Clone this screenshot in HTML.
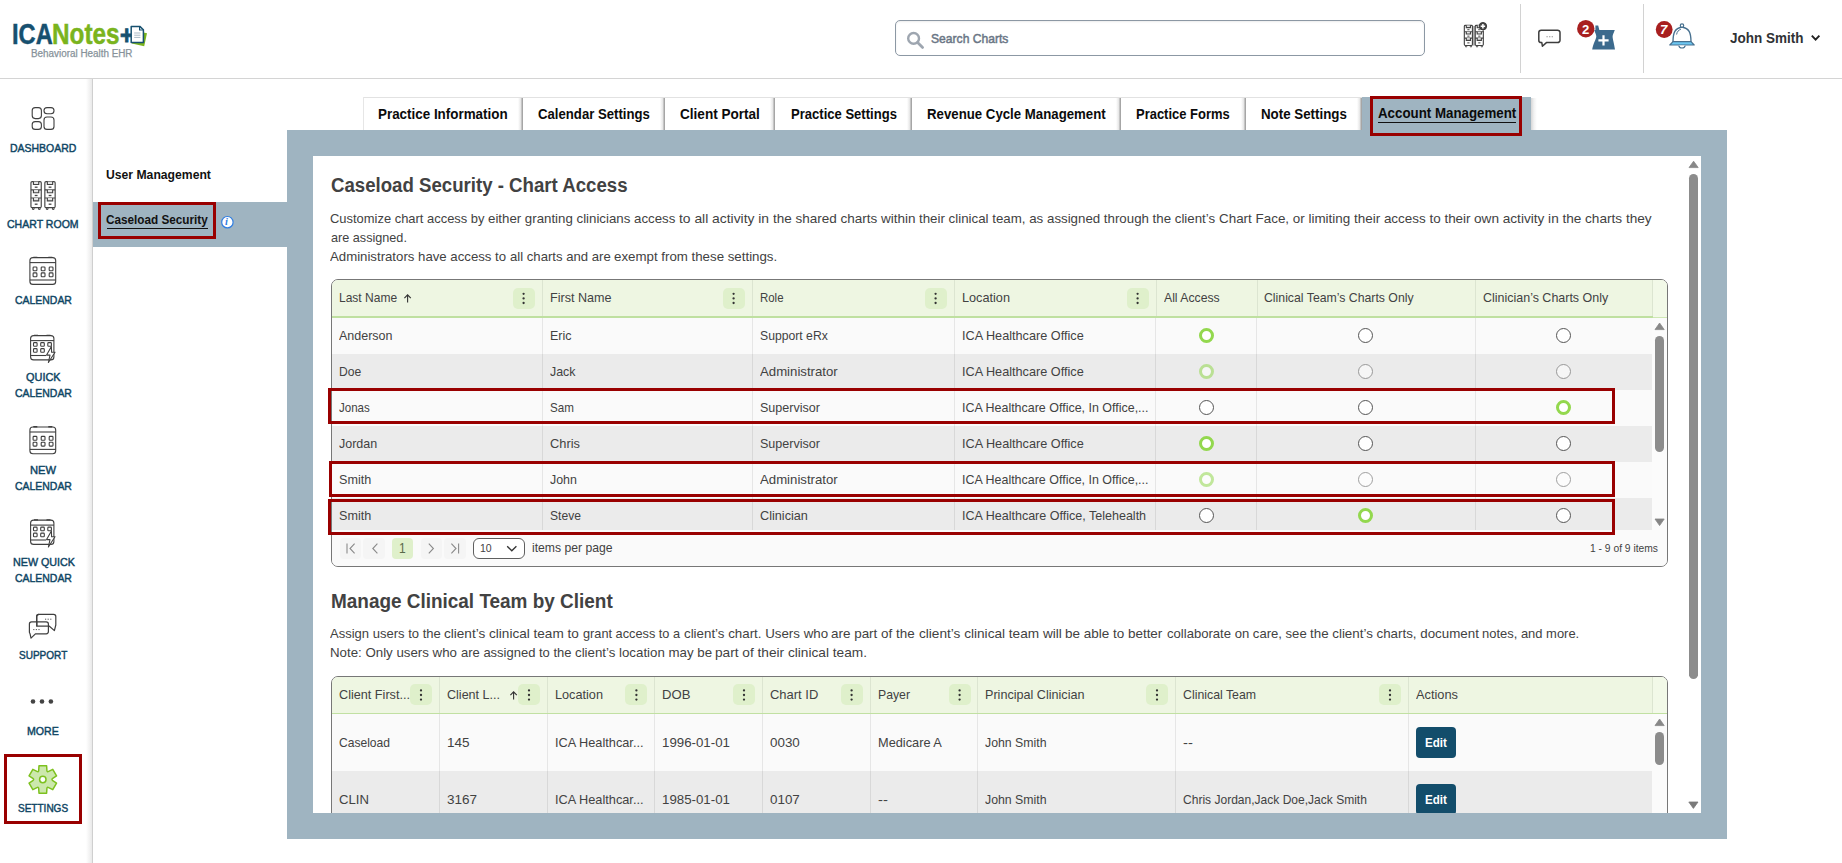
<!DOCTYPE html>
<html lang="en"><head><meta charset="utf-8"><title>ICANotes - Account Management - Caseload Security</title>
<style>
html,body{margin:0;padding:0;background:#fff;}
body{width:1842px;height:863px;overflow:hidden;font-family:"Liberation Sans",sans-serif;}
#app{position:relative;width:1842px;height:863px;overflow:hidden;background:#fff;}
#app div,#app header,#app nav,#app main,#app section,#app a,#app button,#app ul,#app li,#app p,#app h1,#app h2,#app aside{position:absolute;box-sizing:border-box;margin:0;padding:0;}
#app button{border:0;font:inherit;cursor:pointer;}
#app p,#app h1,#app h2,.wrap{left:0;top:0;width:0;height:0;font-size:inherit;font-weight:inherit;}
#app svg{position:absolute;overflow:visible;}
.t{position:absolute;white-space:pre;transform-origin:0 0;line-height:normal;font-family:"Liberation Sans",sans-serif;}
.hl{border:3px solid #990000;background:transparent;}

</style></head>
<body>
<div id="app">
<header style="left:0;top:0;width:1842px;height:79px;border-bottom:1px solid #d4d4d4;background:#fff;"><span class="t" style="left:11.70px;top:18.00px;font-size:29px;color:#17506f;font-weight:700;transform:scaleX(0.8148);-webkit-text-stroke:0.5px #17506f;">ICA</span><span class="t" style="left:51.70px;top:18.00px;font-size:29px;color:#7ab41d;font-weight:700;transform:scaleX(0.8377);-webkit-text-stroke:0.5px #7ab41d;">Notes</span><span class="t" style="left:120.30px;top:20.00px;font-size:26px;color:#17506f;font-weight:700;transform:scaleX(0.8757);-webkit-text-stroke:0.9px #17506f;">+</span><span class="t" style="left:30.50px;top:48.00px;font-size:10px;color:#87929a;transform:scaleX(0.9871);-webkit-text-stroke:0.25px #87929a;">Behavioral Health EHR</span><svg style="left:128px;top:22px" width="22" height="24" viewBox="128 22 22 24">
<path d="M134.5 30.5 L147 33.2 L144.2 46.3 L131.8 43.6 Z" fill="#7ab41d"/>
<path d="M131.2 26.4 L139.8 26.4 L143.4 29.8 L143.4 42.6 L131.2 42.6 Z" fill="#fff" stroke="#17506f" stroke-width="1.5" stroke-linejoin="round"/>
<path d="M139.6 26.6 L139.6 30 L143.2 30" fill="none" stroke="#17506f" stroke-width="1.2"/>
<path d="M134.2 33h6.2M134.2 35.2h6.2M134.2 37.4h6.2" stroke="#9fb1bd" stroke-width="0.9"/>
</svg><div class="search" style="left:895px;top:20px;width:530px;height:36px;border:1px solid #8c98a4;border-radius:5px;background:#fff;box-shadow:inset 0 1px 2px rgba(0,0,0,.08);"></div><svg style="left:904px;top:29px" width="22" height="22" viewBox="904 29 22 22">
<circle cx="913.6" cy="38.4" r="5.4" fill="none" stroke="#9ea6b0" stroke-width="2.4"/>
<path d="M917.6 42.6 L922.6 47.4" stroke="#9ea6b0" stroke-width="2.8" stroke-linecap="round"/></svg><span class="t" style="left:931.20px;top:31.00px;font-size:13px;color:#6a7685;transform:scaleX(0.9315);-webkit-text-stroke:0.5px #6a7685;">Search Charts</span><svg style="left:1462px;top:20px" width="26" height="30" viewBox="1462 20 26 30">
<rect x="1472.6" y="26" width="2.8" height="19.6" fill="#b0b0b0"/>
<g transform="translate(1463.9 24.9) scale(0.785 0.775)"><g fill="none" stroke="#444" stroke-width="1.45"><rect x="0.55" y="0.6" width="10.3" height="26" rx="1.2"/><path d="M0.55 8.9h10.3M0.55 17.0h10.3"/><path d="M2.05 26.8v1.6h1.6v-1.6M8.15 26.8v1.6h1.6v-1.6" stroke-width="1"/><path d="M3.05 0.6v2.9h5.3v-2.9" fill="#e4e4e4"/><path d="M4.35 6.2h2.8" stroke-width="1.3"/><path d="M3.05 8.9v2.9h5.3v-2.9" fill="#e4e4e4"/><path d="M4.35 14.5h2.8" stroke-width="1.3"/><path d="M3.05 17.0v2.9h5.3v-2.9" fill="#e4e4e4"/><path d="M4.35 23.2h2.8" stroke-width="1.3"/><rect x="14.45" y="0.6" width="10.3" height="26" rx="1.2"/><path d="M14.45 8.9h10.3M14.45 17.0h10.3"/><path d="M15.95 26.8v1.6h1.6v-1.6M22.05 26.8v1.6h1.6v-1.6" stroke-width="1"/><path d="M16.95 0.6v2.9h5.3v-2.9" fill="#e4e4e4"/><path d="M18.25 6.2h2.8" stroke-width="1.3"/><path d="M16.95 8.9v2.9h5.3v-2.9" fill="#e4e4e4"/><path d="M18.25 14.5h2.8" stroke-width="1.3"/><path d="M16.95 17.0v2.9h5.3v-2.9" fill="#e4e4e4"/><path d="M18.25 23.2h2.8" stroke-width="1.3"/></g></g>
<circle cx="1482.9" cy="26.2" r="4.3" fill="#fff"/>
<circle cx="1482.9" cy="26.2" r="3.7" fill="#4a4a4a" stroke="#333" stroke-width="1"/>
<path d="M1480.7 26.2h4.4M1482.9 24v4.4" stroke="#fff" stroke-width="1.5"/>
</svg><div style="left:1520px;top:4px;width:1px;height:69px;background:#d2d2d2;"></div><div style="left:1643px;top:4px;width:1px;height:69px;background:#d2d2d2;"></div><svg style="left:1536px;top:27px" width="28" height="22" viewBox="1536 27 28 22">
<path d="M1541.2 30.2 h16.4 a2.4 2.4 0 0 1 2.4 2.4 v7.6 a2.4 2.4 0 0 1 -2.4 2.4 h-11.2 l-4 3.6 l-0.6 -3.6 h-0.6 a2.4 2.4 0 0 1 -2.4 -2.4 v-7.6 a2.4 2.4 0 0 1 2.4 -2.4 z" fill="#fff" stroke="#3d3d3d" stroke-width="1.5" stroke-linejoin="round"/>
<path d="M1546.4 36.8h1.4M1549 36.8h1.4M1551.6 36.8h1.4" stroke="#999" stroke-width="1.1"/>
</svg><svg style="left:1575px;top:18px" width="44" height="34" viewBox="1575 18 44 34">
<path d="M1594.2 30 L1614.8 30 C1614 32.5 1612.6 34.5 1612.6 36.5 C1612.6 39 1614.2 44 1615 49.4 L1592.2 49.4 C1593 44 1596.3 39 1596.3 36.5 C1596.3 34.5 1595 32.5 1594.2 30 Z M1595.4 30.2 L1595.4 25.6 L1598.2 25.6 L1599.4 30.2 Z" fill="#3c6a8d"/>
<path d="M1598.4 40.3h10.2M1603.5 35.2v10.2" stroke="#fff" stroke-width="2.2"/>
<circle cx="1585.8" cy="28.7" r="8.7" fill="#a81f1f"/>
</svg><span class="t" style="left:1581.90px;top:23.00px;font-size:12.5px;color:#fff;font-weight:700;transform:scaleX(1.0499);">2</span><svg style="left:1654px;top:18px" width="44" height="34" viewBox="1654 18 44 34">
<path d="M1673 42 C1673 32 1675 28.6 1682 27 C1689 28.6 1691 32 1691 42" fill="#fff" stroke="#47708f" stroke-width="1.4"/>
<path d="M1676.6 34.5 C1677 31.6 1678.6 30 1680.8 29.4" fill="none" stroke="#47708f" stroke-width="1"/>
<circle cx="1682" cy="25.6" r="1.7" fill="#fff" stroke="#47708f" stroke-width="1.2"/>
<path d="M1673 41.6 L1691 41.6 L1694.2 45 L1669.8 45 Z" fill="#6cc7f2" stroke="#47708f" stroke-width="1.2" stroke-linejoin="round"/>
<path d="M1678.8 45.6 C1679.6 48.8 1684.4 48.8 1685.2 45.6" fill="#fff" stroke="#47708f" stroke-width="1.2"/>
<circle cx="1664.2" cy="29.5" r="8.4" fill="#a81f1f"/>
</svg><span class="t" style="left:1660.30px;top:23.00px;font-size:12.5px;color:#fff;font-weight:700;transform:scaleX(1.0499);font-style:italic;">7</span><span class="t" style="left:1729.50px;top:29.00px;font-size:15px;color:#303234;font-weight:700;transform:scaleX(0.8999);">John Smith</span><svg style="left:1809px;top:33px" width="14" height="10" viewBox="1809 33 14 10">
<path d="M1811.8 35.6 L1815.6 39.6 L1819.4 35.6" fill="none" stroke="#222" stroke-width="1.9"/></svg></header><nav class="wrap"><div style="left:0;top:79px;width:93px;height:784px;border-right:1px solid #cfcfcf;background:linear-gradient(to right,#fff 0,#fff 86px,#e9e9e9 92px);"></div><svg style="left:30px;top:105px" width="26" height="26" viewBox="30 105 26 26"><g fill="none" stroke="#3f3f3f" stroke-width="1.1">
<rect x="32.2" y="107.6" width="9.2" height="11" rx="3"/>
<rect x="44" y="107.6" width="10" height="6.2" rx="3"/>
<rect x="32.2" y="121.6" width="9.2" height="7.8" rx="3"/>
<rect x="44" y="117" width="10" height="12.4" rx="3"/></g></svg><span class="t" style="left:10.00px;top:142.00px;font-size:11.4px;color:#0e4564;transform:scaleX(0.9188);-webkit-text-stroke:0.45px #0e4564;">DASHBOARD</span><svg style="left:29px;top:180px" width="28" height="31" viewBox="29 180 28 31"><g fill="none" stroke="#444" stroke-width="1.15"><rect x="30.95" y="181.6" width="10.3" height="26" rx="1.2"/><path d="M30.95 189.9h10.3M30.95 198.0h10.3"/><path d="M32.45 207.8v1.6h1.6v-1.6M38.55 207.8v1.6h1.6v-1.6" stroke-width="1"/><path d="M33.45 181.6v2.9h5.3v-2.9" fill="#e4e4e4"/><path d="M34.75 187.2h2.8" stroke-width="1.3"/><path d="M33.45 189.9v2.9h5.3v-2.9" fill="#e4e4e4"/><path d="M34.75 195.5h2.8" stroke-width="1.3"/><path d="M33.45 198.0v2.9h5.3v-2.9" fill="#e4e4e4"/><path d="M34.75 204.2h2.8" stroke-width="1.3"/><rect x="44.85" y="181.6" width="10.3" height="26" rx="1.2"/><path d="M44.85 189.9h10.3M44.85 198.0h10.3"/><path d="M46.35 207.8v1.6h1.6v-1.6M52.45 207.8v1.6h1.6v-1.6" stroke-width="1"/><path d="M47.35 181.6v2.9h5.3v-2.9" fill="#e4e4e4"/><path d="M48.65 187.2h2.8" stroke-width="1.3"/><path d="M47.35 189.9v2.9h5.3v-2.9" fill="#e4e4e4"/><path d="M48.65 195.5h2.8" stroke-width="1.3"/><path d="M47.35 198.0v2.9h5.3v-2.9" fill="#e4e4e4"/><path d="M48.65 204.2h2.8" stroke-width="1.3"/></g></svg><span class="t" style="left:7.30px;top:218.00px;font-size:11.4px;color:#0e4564;transform:scaleX(0.9248);-webkit-text-stroke:0.45px #0e4564;">CHART ROOM</span><svg style="left:28px;top:256px" width="30" height="30" viewBox="28 256 30 30"><g fill="none" stroke="#3f3f3f" stroke-width="1.1"><rect x="29.9" y="257.6" width="25.8" height="26.8" rx="3"/><path d="M29.9 262.6h25.8"/><path d="M29.9 280.0h25.8"/><path d="M33.3 257.4h4M48.3 257.4h4" stroke-width="1.4"/><rect x="33.1" y="267.0" width="3.8" height="3.8" rx="0.8"/><rect x="41.2" y="267.0" width="3.8" height="3.8" rx="0.8"/><rect x="49.2" y="267.0" width="3.8" height="3.8" rx="0.8"/><rect x="33.1" y="272.9" width="3.8" height="3.8" rx="0.8"/><rect x="41.2" y="272.9" width="3.8" height="3.8" rx="0.8"/><rect x="49.2" y="272.9" width="3.8" height="3.8" rx="0.8"/></g></svg><span class="t" style="left:14.80px;top:294.00px;font-size:11.4px;color:#0e4564;transform:scaleX(0.9173);-webkit-text-stroke:0.45px #0e4564;">CALENDAR</span><svg style="left:28px;top:334px" width="30" height="31" viewBox="28 334 30 31"><g fill="none" stroke="#3f3f3f" stroke-width="1.1"><rect x="30.6" y="335.6" width="23.3" height="24.3" rx="3"/><path d="M30.6 340.6h23.3"/><path d="M30.6 355.5h15.5"/><path d="M34.0 335.4h4M46.5 335.4h4" stroke-width="1.4"/><rect x="33.5" y="342.6" width="3.6" height="3.6" rx="0.8"/><rect x="40.7" y="342.6" width="3.6" height="3.6" rx="0.8"/><rect x="47.8" y="342.6" width="3.6" height="3.6" rx="0.8"/><rect x="33.5" y="348.6" width="3.6" height="3.6" rx="0.8"/><rect x="40.7" y="348.6" width="3.6" height="3.6" rx="0.8"/></g><path d="M51.4 346.5 L46.6 355.1 L50.0 355.1 L48.4 362.5 L55.0 352.3 L51.6 352.3 Z" fill="#fff" stroke="#3f3f3f" stroke-width="1.1" stroke-linejoin="round"/></svg><span class="t" style="left:26.00px;top:371.00px;font-size:11.4px;color:#0e4564;transform:scaleX(0.9590);-webkit-text-stroke:0.45px #0e4564;">QUICK</span><span class="t" style="left:14.80px;top:387.00px;font-size:11.4px;color:#0e4564;transform:scaleX(0.9173);-webkit-text-stroke:0.45px #0e4564;">CALENDAR</span><svg style="left:28px;top:425px" width="30" height="30" viewBox="28 425 30 30"><g fill="none" stroke="#3f3f3f" stroke-width="1.1"><rect x="29.9" y="427.0" width="25.8" height="26.8" rx="3"/><path d="M29.9 432.0h25.8"/><path d="M29.9 449.4h25.8"/><path d="M33.3 426.8h4M48.3 426.8h4" stroke-width="1.4"/><rect x="33.1" y="436.4" width="3.8" height="3.8" rx="0.8"/><rect x="41.2" y="436.4" width="3.8" height="3.8" rx="0.8"/><rect x="49.2" y="436.4" width="3.8" height="3.8" rx="0.8"/><rect x="33.1" y="442.3" width="3.8" height="3.8" rx="0.8"/><rect x="41.2" y="442.3" width="3.8" height="3.8" rx="0.8"/><rect x="49.2" y="442.3" width="3.8" height="3.8" rx="0.8"/></g></svg><span class="t" style="left:30.40px;top:464.00px;font-size:11.4px;color:#0e4564;transform:scaleX(0.9782);-webkit-text-stroke:0.45px #0e4564;">NEW</span><span class="t" style="left:14.80px;top:480.00px;font-size:11.4px;color:#0e4564;transform:scaleX(0.9173);-webkit-text-stroke:0.45px #0e4564;">CALENDAR</span><svg style="left:28px;top:518px" width="30" height="31" viewBox="28 518 30 31"><g fill="none" stroke="#3f3f3f" stroke-width="1.1"><rect x="30.6" y="520.1" width="23.3" height="24.3" rx="3"/><path d="M30.6 525.1h23.3"/><path d="M30.6 540.0h15.5"/><path d="M34.0 519.9h4M46.5 519.9h4" stroke-width="1.4"/><rect x="33.5" y="527.1" width="3.6" height="3.6" rx="0.8"/><rect x="40.7" y="527.1" width="3.6" height="3.6" rx="0.8"/><rect x="47.8" y="527.1" width="3.6" height="3.6" rx="0.8"/><rect x="33.5" y="533.1" width="3.6" height="3.6" rx="0.8"/><rect x="40.7" y="533.1" width="3.6" height="3.6" rx="0.8"/></g><path d="M51.4 531.0 L46.6 539.6 L50.0 539.6 L48.4 547.0 L55.0 536.8 L51.6 536.8 Z" fill="#fff" stroke="#3f3f3f" stroke-width="1.1" stroke-linejoin="round"/></svg><span class="t" style="left:12.50px;top:556.00px;font-size:11.4px;color:#0e4564;transform:scaleX(0.9418);-webkit-text-stroke:0.45px #0e4564;">NEW QUICK</span><span class="t" style="left:14.80px;top:572.00px;font-size:11.4px;color:#0e4564;transform:scaleX(0.9173);-webkit-text-stroke:0.45px #0e4564;">CALENDAR</span><svg style="left:27px;top:612px" width="32" height="29" viewBox="27 612 32 29"><g fill="#fff" stroke="#3f3f3f" stroke-width="1.2" stroke-linejoin="round">
<path d="M38.8 614.4 h14.8 a2.2 2.2 0 0 1 2.2 2.2 v8.4 l-1.4 5.6 l-5 -4.4 h-10.6 a2.2 2.2 0 0 1 -2.2 -2.2 v-7.4 a2.2 2.2 0 0 1 2.2 -2.2 z"/>
<path d="M31.6 621.8 h14.6 a2.2 2.2 0 0 1 2.2 2.2 v7.6 a2.2 2.2 0 0 1 -2.2 2.2 h-10.8 l-4.4 4.4 l-1 -4.6 a2.2 2.2 0 0 1 -0.6 -1.6 v-8 a2.2 2.2 0 0 1 2.2 -2.2 z"/>
<path d="M36.8 626.2 v-9.6 a2.2 2.2 0 0 1 2.2 -2.2" fill="none"/>
</g>
<path d="M45 619.2h1.2M47.6 619.2h1.2M50.2 619.2h1.2M33.2 629.6h1.2M35.8 629.6h1.2M38.4 629.6h1.2" stroke="#555" stroke-width="1"/>
<path d="M36.8 621.8 v4.4 h11.6" fill="none" stroke="#3f3f3f" stroke-width="1.2"/>
</svg><span class="t" style="left:18.80px;top:649.00px;font-size:11.4px;color:#0e4564;transform:scaleX(0.8804);-webkit-text-stroke:0.45px #0e4564;">SUPPORT</span><svg style="left:28px;top:697px" width="28" height="10" viewBox="28 697 28 10"><g fill="#444"><circle cx="33" cy="701.5" r="2.3"/><circle cx="42" cy="701.5" r="2.3"/><circle cx="50.9" cy="701.5" r="2.3"/></g></svg><span class="t" style="left:27.30px;top:725.00px;font-size:11.4px;color:#0e4564;transform:scaleX(0.9302);-webkit-text-stroke:0.45px #0e4564;">MORE</span><svg style="left:26px;top:763px" width="34" height="34" viewBox="26 763 34 34">
<path d="M38.70 770.38 L39.00 765.82 L46.60 765.82 L46.90 770.38 Q47.00 772.23 48.65 771.39 L52.75 769.37 L56.55 775.95 L52.75 778.49 Q51.20 779.50 52.75 780.51 L56.55 783.05 L52.75 789.63 L48.65 787.61 Q47.00 786.77 46.90 788.62 L46.60 793.18 L39.00 793.18 L38.70 788.62 Q38.60 786.77 36.95 787.61 L32.85 789.63 L29.05 783.05 L32.85 780.51 Q34.40 779.50 32.85 778.49 L29.05 775.95 L32.85 769.37 L36.95 771.39 Q38.60 772.23 38.70 770.38 Z" fill="#cce8ac" stroke="#7dc11f" stroke-width="1.5" stroke-linejoin="round"/>
<circle cx="42.8" cy="779.5" r="3.2" fill="#fff" stroke="#7dc11f" stroke-width="1.5"/></svg><span class="t" style="left:18.00px;top:802.00px;font-size:11.4px;color:#0e4564;transform:scaleX(0.8794);-webkit-text-stroke:0.45px #0e4564;">SETTINGS</span><div class="hl" style="left:4px;top:754px;width:78px;height:70px;"></div></nav><aside class="wrap"><span class="t" style="left:106.10px;top:167.00px;font-size:13px;color:#111;font-weight:700;transform:scaleX(0.9367);">User Management</span><div style="left:93px;top:202px;width:194px;height:45px;background:#9fb4c1;"></div><span class="t" style="left:106.10px;top:212.00px;font-size:13px;color:#111;font-weight:700;transform:scaleX(0.9031);">Caseload Security</span><div style="left:107px;top:228px;width:101px;height:1px;background:#111;"></div><div class="hl" style="left:98px;top:202px;width:118px;height:37px;"></div><svg style="left:220px;top:215px" width="15" height="15" viewBox="220 215 15 15"><circle cx="227.4" cy="222.2" r="5.7" fill="#fff" stroke="#2f7de1" stroke-width="1.2"/></svg><span class="t" style="left:225.40px;top:217.00px;font-size:9.5px;color:#2f7de1;font-weight:700;transform:scaleX(1.1000);font-style:italic;font-family:'Liberation Serif',serif;">i</span></aside><main class="wrap"><a class="tab" style="left:363px;top:97px;width:160px;height:33px;background:linear-gradient(to right,#fff 0,#fff calc(100% - 5px),#e4e4e4 calc(100% - 2px),#a6a6a6 calc(100% - 1px),#a6a6a6 100%);border-top:1px solid #e2e2e2;"><span class="t" style="left:14.90px;top:7.00px;font-size:15px;color:#0b0b0b;font-weight:700;transform:scaleX(0.8935);">Practice Information</span></a><a class="tab" style="left:523px;top:97px;width:142px;height:33px;background:linear-gradient(to right,#fff 0,#fff calc(100% - 5px),#e4e4e4 calc(100% - 2px),#a6a6a6 calc(100% - 1px),#a6a6a6 100%);border-top:1px solid #e2e2e2;"><span class="t" style="left:14.50px;top:7.00px;font-size:15px;color:#0b0b0b;font-weight:700;transform:scaleX(0.8774);">Calendar Settings</span></a><a class="tab" style="left:665px;top:97px;width:110px;height:33px;background:linear-gradient(to right,#fff 0,#fff calc(100% - 5px),#e4e4e4 calc(100% - 2px),#a6a6a6 calc(100% - 1px),#a6a6a6 100%);border-top:1px solid #e2e2e2;"><span class="t" style="left:14.90px;top:7.00px;font-size:15px;color:#0b0b0b;font-weight:700;transform:scaleX(0.9043);">Client Portal</span></a><a class="tab" style="left:775px;top:97px;width:137px;height:33px;background:linear-gradient(to right,#fff 0,#fff calc(100% - 5px),#e4e4e4 calc(100% - 2px),#a6a6a6 calc(100% - 1px),#a6a6a6 100%);border-top:1px solid #e2e2e2;"><span class="t" style="left:15.50px;top:7.00px;font-size:15px;color:#0b0b0b;font-weight:700;transform:scaleX(0.8700);">Practice Settings</span></a><a class="tab" style="left:912px;top:97px;width:209px;height:33px;background:linear-gradient(to right,#fff 0,#fff calc(100% - 5px),#e4e4e4 calc(100% - 2px),#a6a6a6 calc(100% - 1px),#a6a6a6 100%);border-top:1px solid #e2e2e2;"><span class="t" style="left:14.90px;top:7.00px;font-size:15px;color:#0b0b0b;font-weight:700;transform:scaleX(0.8821);">Revenue Cycle Management</span></a><a class="tab" style="left:1121px;top:97px;width:125px;height:33px;background:linear-gradient(to right,#fff 0,#fff calc(100% - 5px),#e4e4e4 calc(100% - 2px),#a6a6a6 calc(100% - 1px),#a6a6a6 100%);border-top:1px solid #e2e2e2;"><span class="t" style="left:15.30px;top:7.00px;font-size:15px;color:#0b0b0b;font-weight:700;transform:scaleX(0.8645);">Practice Forms</span></a><a class="tab" style="left:1246px;top:97px;width:116px;height:33px;background:linear-gradient(to right,#fff 0,#fff calc(100% - 5px),#e4e4e4 calc(100% - 2px),#a6a6a6 calc(100% - 1px),#a6a6a6 100%);border-top:1px solid #e2e2e2;"><span class="t" style="left:15.10px;top:7.00px;font-size:15px;color:#0b0b0b;font-weight:700;transform:scaleX(0.8884);">Note Settings</span></a><div style="left:363px;top:97px;width:1px;height:33px;background:#e6e6e6;"></div><div style="left:1531px;top:98px;width:6px;height:32px;background:linear-gradient(to right,rgba(0,0,0,.16),rgba(0,0,0,.05) 50%,rgba(0,0,0,0));"></div><a class="tab active" style="left:1362px;top:97px;width:169px;height:34px;background:#9fb4c1;"><span class="t" style="left:15.50px;top:7.00px;font-size:15px;color:#0b0b0b;font-weight:700;transform:scaleX(0.8873);">Account Management</span><div style="left:16px;top:25px;width:138px;height:1px;background:#111;"></div></a><div class="hl" style="left:1370px;top:96px;width:152px;height:40px;"></div><div style="left:287px;top:130px;width:1440px;height:709px;background:#9fb4c1;"></div><div style="left:313px;top:156px;width:1388px;height:657px;background:#fff;"></div><div class="hl" style="left:1370px;top:96px;width:152px;height:40px;"></div><div style="left:1686px;top:156px;width:15px;height:657px;background:#fff;"></div><div style="left:1689px;top:174px;width:9px;height:505px;background:#8c8c8c;border-radius:4.5px;"></div><svg style="left:1686px;top:156px" width="15" height="657" viewBox="1686 156 15 657"><path d="M1689 167.6 L1693.6 161.2 L1698.2 167.6 Z" fill="#888" stroke="#888" stroke-width="0.8" stroke-linejoin="round"/><path d="M1688.8 802 L1693.4 808.4 L1698 802 Z" fill="#7a7a7a" stroke="#7a7a7a" stroke-width="0.8" stroke-linejoin="round"/></svg><h1><span class="t" style="left:330.50px;top:174.00px;font-size:20px;color:#424242;font-weight:700;transform:scaleX(0.9316);">Caseload Security - Chart Access</span></h1><p><span class="t" style="left:330.00px;top:211.00px;font-size:13px;color:#424242;transform:scaleX(0.9946);">Customize chart access by </span><span class="t" style="left:488.10px;top:211.00px;font-size:13px;color:#424242;transform:scaleX(1.0205);">either granting clinicians access </span><span class="t" style="left:679.10px;top:211.00px;font-size:13px;color:#424242;transform:scaleX(1.0652);">to all activity in </span><span class="t" style="left:773.00px;top:211.00px;font-size:13px;color:#424242;transform:scaleX(1.0383);">the shared charts within </span><span class="t" style="left:919.30px;top:211.00px;font-size:13px;color:#424242;transform:scaleX(1.0232);">their clinical team, as </span><span class="t" style="left:1047.20px;top:211.00px;font-size:13px;color:#424242;transform:scaleX(1.0217);">assigned through the client’s </span><span class="t" style="left:1219.00px;top:211.00px;font-size:13px;color:#424242;transform:scaleX(1.0316);">Chart Face, or limiting </span><span class="t" style="left:1353.90px;top:211.00px;font-size:13px;color:#424242;transform:scaleX(1.0341);">their access to their </span><span class="t" style="left:1474.20px;top:211.00px;font-size:13px;color:#424242;transform:scaleX(1.0469);">own activity in the </span><span class="t" style="left:1585.40px;top:211.00px;font-size:13px;color:#424242;transform:scaleX(1.0488);">charts they</span> <span class="t" style="left:330.50px;top:230.00px;font-size:13px;color:#424242;transform:scaleX(0.9723);">are assigned.</span></p><p><span class="t" style="left:330.00px;top:249.00px;font-size:13px;color:#424242;transform:scaleX(1.0156);">Administrators have access to </span><span class="t" style="left:509.80px;top:249.00px;font-size:13px;color:#424242;transform:scaleX(1.0102);">all charts and are </span><span class="t" style="left:614.20px;top:249.00px;font-size:13px;color:#424242;transform:scaleX(1.0220);">exempt from these settings.</span></p><section class="wrap"><div class="grid" style="left:331px;top:279px;width:1337px;height:288px;border:1px solid #777;border-radius:7px;background:#fafafa;overflow:hidden;"></div><div style="left:332px;top:280px;width:1335px;height:36px;background:#eef6e2;border-radius:6px 6px 0 0;"></div><div style="left:332px;top:316px;width:1335px;height:2px;background:#bfe0a0;"></div><div style="left:542px;top:280px;width:1px;height:36px;background:#dce5d1;"></div><div style="left:752px;top:280px;width:1px;height:36px;background:#dce5d1;"></div><div style="left:954px;top:280px;width:1px;height:36px;background:#dce5d1;"></div><div style="left:1156px;top:280px;width:1px;height:36px;background:#dce5d1;"></div><div style="left:1257px;top:280px;width:1px;height:36px;background:#dce5d1;"></div><div style="left:1475px;top:280px;width:1px;height:36px;background:#dce5d1;"></div><div style="left:1652px;top:280px;width:1px;height:36px;background:#dce5d1;"></div><div style="left:1653px;top:280px;width:14px;height:37px;background:#f2f9e8;border-radius:0 6px 0 0;"></div><div style="left:1653px;top:317px;width:14px;height:1px;background:#cfe8b5;"></div><span class="t" style="left:338.80px;top:290.00px;font-size:13px;color:#424242;transform:scaleX(0.9241);">Last Name</span><span class="t" style="left:549.50px;top:290.00px;font-size:13px;color:#424242;transform:scaleX(0.9676);">First Name</span><span class="t" style="left:759.50px;top:290.00px;font-size:13px;color:#424242;transform:scaleX(0.8785);">Role</span><span class="t" style="left:961.50px;top:290.00px;font-size:13px;color:#424242;transform:scaleX(0.9765);">Location</span><span class="t" style="left:1163.60px;top:290.00px;font-size:13px;color:#424242;transform:scaleX(0.9401);">All Access</span><span class="t" style="left:1264.40px;top:290.00px;font-size:13px;color:#424242;transform:scaleX(0.9440);">Clinical Team’s Charts Only</span><span class="t" style="left:1482.80px;top:290.00px;font-size:13px;color:#424242;transform:scaleX(0.9592);">Clinician’s Charts Only</span><svg style="left:403px;top:293px" width="10" height="11" viewBox="403 293 10 11"><path d="M407.6 302.6 V295.2 M404.4 298.2 L407.6 294.8 L410.8 298.2" fill="none" stroke="#333" stroke-width="1.1"/></svg><div style="left:513px;top:288px;width:22px;height:21px;background:#dff0cb;border-radius:5px;"></div><svg style="left:513px;top:288px" width="22" height="21" viewBox="513 288 22 21"><g fill="#333"><circle cx="523.6" cy="293.79999999999995" r="1.15"/><circle cx="523.6" cy="298.4" r="1.15"/><circle cx="523.6" cy="303.0" r="1.15"/></g></svg><div style="left:723px;top:288px;width:22px;height:21px;background:#dff0cb;border-radius:5px;"></div><svg style="left:723px;top:288px" width="22" height="21" viewBox="723 288 22 21"><g fill="#333"><circle cx="733.6" cy="293.79999999999995" r="1.15"/><circle cx="733.6" cy="298.4" r="1.15"/><circle cx="733.6" cy="303.0" r="1.15"/></g></svg><div style="left:925px;top:288px;width:22px;height:21px;background:#dff0cb;border-radius:5px;"></div><svg style="left:925px;top:288px" width="22" height="21" viewBox="925 288 22 21"><g fill="#333"><circle cx="935.6" cy="293.79999999999995" r="1.15"/><circle cx="935.6" cy="298.4" r="1.15"/><circle cx="935.6" cy="303.0" r="1.15"/></g></svg><div style="left:1127px;top:288px;width:22px;height:21px;background:#dff0cb;border-radius:5px;"></div><svg style="left:1127px;top:288px" width="22" height="21" viewBox="1127 288 22 21"><g fill="#333"><circle cx="1137.6" cy="293.79999999999995" r="1.15"/><circle cx="1137.6" cy="298.4" r="1.15"/><circle cx="1137.6" cy="303.0" r="1.15"/></g></svg><div class="row" style="left:332px;top:318px;width:1320px;height:36px;background:#fafafa;"></div><span class="t" style="left:338.80px;top:328.00px;font-size:13px;color:#424242;transform:scaleX(0.9613);">Anderson</span><span class="t" style="left:549.50px;top:328.00px;font-size:13px;color:#424242;transform:scaleX(0.9602);">Eric</span><span class="t" style="left:759.50px;top:328.00px;font-size:13px;color:#424242;transform:scaleX(0.9382);">Support eRx</span><span class="t" style="left:961.50px;top:328.00px;font-size:13px;color:#424242;transform:scaleX(0.9754);">ICA Healthcare Office</span><div style="left:1199.0px;top:328.0px;width:15px;height:15px;border-radius:50%;border:3px solid #93d84e;background:#fff;"></div><div style="left:1358.4px;top:328.0px;width:15px;height:15px;border-radius:50%;border:1px solid #555;background:#fff;"></div><div style="left:1556.4px;top:328.0px;width:15px;height:15px;border-radius:50%;border:1px solid #555;background:#fff;"></div><div class="row" style="left:332px;top:354px;width:1320px;height:36px;background:#ebebeb;"></div><span class="t" style="left:338.80px;top:364.00px;font-size:13px;color:#424242;transform:scaleX(0.9305);">Doe</span><span class="t" style="left:549.50px;top:364.00px;font-size:13px;color:#424242;transform:scaleX(0.9538);">Jack</span><span class="t" style="left:759.50px;top:364.00px;font-size:13px;color:#424242;transform:scaleX(1.0147);">Administrator</span><span class="t" style="left:961.50px;top:364.00px;font-size:13px;color:#424242;transform:scaleX(0.9754);">ICA Healthcare Office</span><div style="left:1199.0px;top:364.0px;width:15px;height:15px;border-radius:50%;border:3px solid #93d84e;background:#fff;opacity:.55;"></div><div style="left:1358.4px;top:364.0px;width:15px;height:15px;border-radius:50%;border:1px solid #555;background:#fff;opacity:.55;"></div><div style="left:1556.4px;top:364.0px;width:15px;height:15px;border-radius:50%;border:1px solid #555;background:#fff;opacity:.55;"></div><div class="row" style="left:332px;top:390px;width:1320px;height:36px;background:#fafafa;"></div><span class="t" style="left:338.80px;top:400.00px;font-size:13px;color:#424242;transform:scaleX(0.8875);">Jonas</span><span class="t" style="left:549.50px;top:400.00px;font-size:13px;color:#424242;transform:scaleX(0.8940);">Sam</span><span class="t" style="left:759.50px;top:400.00px;font-size:13px;color:#424242;transform:scaleX(0.9639);">Supervisor</span><span class="t" style="left:961.50px;top:400.00px;font-size:13px;color:#424242;transform:scaleX(0.9583);">ICA Healthcare Office, In Office,...</span><div style="left:1199.0px;top:400.0px;width:15px;height:15px;border-radius:50%;border:1px solid #555;background:#fff;"></div><div style="left:1358.4px;top:400.0px;width:15px;height:15px;border-radius:50%;border:1px solid #555;background:#fff;"></div><div style="left:1556.4px;top:400.0px;width:15px;height:15px;border-radius:50%;border:3px solid #93d84e;background:#fff;"></div><div class="row" style="left:332px;top:426px;width:1320px;height:36px;background:#ebebeb;"></div><span class="t" style="left:338.80px;top:436.00px;font-size:13px;color:#424242;transform:scaleX(0.9610);">Jordan</span><span class="t" style="left:549.50px;top:436.00px;font-size:13px;color:#424242;transform:scaleX(0.9854);">Chris</span><span class="t" style="left:759.50px;top:436.00px;font-size:13px;color:#424242;transform:scaleX(0.9639);">Supervisor</span><span class="t" style="left:961.50px;top:436.00px;font-size:13px;color:#424242;transform:scaleX(0.9754);">ICA Healthcare Office</span><div style="left:1199.0px;top:436.0px;width:15px;height:15px;border-radius:50%;border:3px solid #93d84e;background:#fff;"></div><div style="left:1358.4px;top:436.0px;width:15px;height:15px;border-radius:50%;border:1px solid #555;background:#fff;"></div><div style="left:1556.4px;top:436.0px;width:15px;height:15px;border-radius:50%;border:1px solid #555;background:#fff;"></div><div class="row" style="left:332px;top:462px;width:1320px;height:36px;background:#fafafa;"></div><span class="t" style="left:338.80px;top:472.00px;font-size:13px;color:#424242;transform:scaleX(0.9689);">Smith</span><span class="t" style="left:549.50px;top:472.00px;font-size:13px;color:#424242;transform:scaleX(0.9538);">John</span><span class="t" style="left:759.50px;top:472.00px;font-size:13px;color:#424242;transform:scaleX(1.0147);">Administrator</span><span class="t" style="left:961.50px;top:472.00px;font-size:13px;color:#424242;transform:scaleX(0.9583);">ICA Healthcare Office, In Office,...</span><div style="left:1199.0px;top:472.0px;width:15px;height:15px;border-radius:50%;border:3px solid #93d84e;background:#fff;opacity:.55;"></div><div style="left:1358.4px;top:472.0px;width:15px;height:15px;border-radius:50%;border:1px solid #555;background:#fff;opacity:.55;"></div><div style="left:1556.4px;top:472.0px;width:15px;height:15px;border-radius:50%;border:1px solid #555;background:#fff;opacity:.55;"></div><div class="row" style="left:332px;top:498px;width:1320px;height:32px;background:#ebebeb;"></div><span class="t" style="left:338.80px;top:508.00px;font-size:13px;color:#424242;transform:scaleX(0.9689);">Smith</span><span class="t" style="left:549.50px;top:508.00px;font-size:13px;color:#424242;transform:scaleX(0.9293);">Steve</span><span class="t" style="left:759.50px;top:508.00px;font-size:13px;color:#424242;transform:scaleX(0.9748);">Clinician</span><span class="t" style="left:961.50px;top:508.00px;font-size:13px;color:#424242;transform:scaleX(0.9637);">ICA Healthcare Office, Telehealth</span><div style="left:1199.0px;top:508.0px;width:15px;height:15px;border-radius:50%;border:1px solid #555;background:#fff;"></div><div style="left:1358.4px;top:508.0px;width:15px;height:15px;border-radius:50%;border:3px solid #93d84e;background:#fff;"></div><div style="left:1556.4px;top:508.0px;width:15px;height:15px;border-radius:50%;border:1px solid #555;background:#fff;"></div><div style="left:542px;top:318px;width:1px;height:212px;background:rgba(0,0,0,.08);"></div><div style="left:752px;top:318px;width:1px;height:212px;background:rgba(0,0,0,.08);"></div><div style="left:954px;top:318px;width:1px;height:212px;background:rgba(0,0,0,.08);"></div><div style="left:1155px;top:318px;width:1px;height:212px;background:rgba(0,0,0,.08);"></div><div style="left:1256px;top:318px;width:1px;height:212px;background:rgba(0,0,0,.08);"></div><div style="left:1475px;top:318px;width:1px;height:212px;background:rgba(0,0,0,.08);"></div><div style="left:1652px;top:318px;width:15px;height:212px;background:#fbfbfb;"></div><div style="left:1655px;top:336px;width:9px;height:116px;background:#8c8c8c;border-radius:4.5px;"></div><svg style="left:1652px;top:318px" width="15" height="212" viewBox="1652 318 15 212"><path d="M1655 329.6 L1659.6 323 L1664.2 329.6 Z" fill="#888" stroke="#888" stroke-width="0.8" stroke-linejoin="round"/><path d="M1655 519 L1659.6 525.6 L1664.2 519 Z" fill="#858585" stroke="#858585" stroke-width="0.8" stroke-linejoin="round"/></svg><div style="left:332px;top:530px;width:1335px;height:36px;background:#fafafa;border-radius:0 0 6px 6px;"></div><div style="left:340px;top:538px;width:21px;height:21px;background:#f5f5f5;border-radius:4px;"></div><div style="left:363px;top:538px;width:22px;height:21px;background:#f5f5f5;border-radius:4px;"></div><div style="left:392px;top:538px;width:21px;height:21px;background:#dff0cb;border-radius:4px;"></div><div style="left:421px;top:538px;width:21px;height:21px;background:#f5f5f5;border-radius:4px;"></div><div style="left:444px;top:538px;width:22px;height:21px;background:#f5f5f5;border-radius:4px;"></div><svg style="left:340px;top:538px" width="130" height="21" viewBox="340 538 130 21"><g fill="none" stroke="#8a8a8a" stroke-width="1.1">
<path d="M347 543.4v10.2M354.6 543.6l-4.6 4.9l4.6 4.9"/>
<path d="M377.4 543.6l-4.6 4.9l4.6 4.9"/>
<path d="M428.8 543.6l4.6 4.9l-4.6 4.9"/>
<path d="M451.4 543.6l4.6 4.9l-4.6 4.9M458.6 543.4v10.2"/></g></svg><span class="t" style="left:398.70px;top:540.00px;font-size:14.5px;color:#5a6a4a;transform:scaleX(0.8294);">1</span><div style="left:473px;top:538px;width:52px;height:21px;border:1px solid #5f5f5f;border-radius:6px;background:#fff;"></div><span class="t" style="left:480.10px;top:542.00px;font-size:11px;color:#424242;transform:scaleX(0.9551);">10</span><svg style="left:505px;top:543px" width="14" height="10" viewBox="505 543 14 10"><path d="M507.2 546.2 L511.8 550.8 L516.4 546.2" fill="none" stroke="#333" stroke-width="1.3"/></svg><span class="t" style="left:531.80px;top:540.00px;font-size:13px;color:#424242;transform:scaleX(0.9372);">items per page</span><span class="t" style="left:1590.30px;top:542.00px;font-size:11px;color:#424242;transform:scaleX(0.9345);">1 - 9 of 9 items</span><div class="hl" style="left:328px;top:388px;width:1287px;height:36px;"></div><div class="hl" style="left:329px;top:461px;width:1286px;height:36px;"></div><div class="hl" style="left:328px;top:499px;width:1287px;height:36px;"></div></section><h2><span class="t" style="left:330.50px;top:590.00px;font-size:20px;color:#424242;font-weight:700;transform:scaleX(0.9469);">Manage Clinical Team by Client</span></h2><p><span class="t" style="left:330.00px;top:626.00px;font-size:13px;color:#424242;transform:scaleX(1.0020);">Assign users to the </span><span class="t" style="left:444.40px;top:626.00px;font-size:13px;color:#424242;transform:scaleX(1.0443);">client’s clinical team to </span><span class="t" style="left:583.00px;top:626.00px;font-size:13px;color:#424242;transform:scaleX(0.9803);">grant access to a </span><span class="t" style="left:683.60px;top:626.00px;font-size:13px;color:#424242;transform:scaleX(1.0245);">client’s chart. Users who </span><span class="t" style="left:831.40px;top:626.00px;font-size:13px;color:#424242;transform:scaleX(1.0336);">are part of the </span><span class="t" style="left:918.80px;top:626.00px;font-size:13px;color:#424242;transform:scaleX(1.0477);">client’s clinical team will </span><span class="t" style="left:1065.40px;top:626.00px;font-size:13px;color:#424242;transform:scaleX(1.0361);">be able to better </span><span class="t" style="left:1166.50px;top:626.00px;font-size:13px;color:#424242;transform:scaleX(1.0065);">collaborate on care, see </span><span class="t" style="left:1309.80px;top:626.00px;font-size:13px;color:#424242;transform:scaleX(1.0266);">the client’s charts, document </span><span class="t" style="left:1482.40px;top:626.00px;font-size:13px;color:#424242;transform:scaleX(0.9963);">notes, and more.</span></p><p><span class="t" style="left:330.00px;top:645.00px;font-size:13px;color:#424242;transform:scaleX(1.0212);">Note: Only users who </span><span class="t" style="left:460.60px;top:645.00px;font-size:13px;color:#424242;transform:scaleX(0.9991);">are assigned to the </span><span class="t" style="left:574.70px;top:645.00px;font-size:13px;color:#424242;transform:scaleX(1.0212);">client’s location may be </span><span class="t" style="left:715.40px;top:645.00px;font-size:13px;color:#424242;transform:scaleX(1.0518);">part of their clinical team.</span></p><section class="wrap"><div style="left:331px;top:676px;width:1337px;height:160px;border:1px solid #777;border-radius:7px;background:#fafafa;"></div><div style="left:332px;top:677px;width:1335px;height:36px;background:#eef6e2;border-radius:6px 6px 0 0;"></div><div style="left:332px;top:713px;width:1335px;height:1px;background:#c1e0a2;"></div><div style="left:439px;top:677px;width:1px;height:36px;background:#dce5d1;"></div><div style="left:547px;top:677px;width:1px;height:36px;background:#dce5d1;"></div><div style="left:654px;top:677px;width:1px;height:36px;background:#dce5d1;"></div><div style="left:762px;top:677px;width:1px;height:36px;background:#dce5d1;"></div><div style="left:870px;top:677px;width:1px;height:36px;background:#dce5d1;"></div><div style="left:977px;top:677px;width:1px;height:36px;background:#dce5d1;"></div><div style="left:1175px;top:677px;width:1px;height:36px;background:#dce5d1;"></div><div style="left:1408px;top:677px;width:1px;height:36px;background:#dce5d1;"></div><div style="left:1652px;top:677px;width:1px;height:36px;background:#dce5d1;"></div><div style="left:1653px;top:677px;width:14px;height:36px;background:#f2f9e8;border-radius:0 6px 0 0;"></div><span class="t" style="left:338.50px;top:687.00px;font-size:13px;color:#424242;transform:scaleX(0.9730);">Client First...</span><span class="t" style="left:446.50px;top:687.00px;font-size:13px;color:#424242;transform:scaleX(0.9650);">Client L...</span><span class="t" style="left:554.50px;top:687.00px;font-size:13px;color:#424242;transform:scaleX(0.9765);">Location</span><span class="t" style="left:662.10px;top:687.00px;font-size:13px;color:#424242;transform:scaleX(1.0081);">DOB</span><span class="t" style="left:769.70px;top:687.00px;font-size:13px;color:#424242;transform:scaleX(0.9978);">Chart ID</span><span class="t" style="left:877.50px;top:687.00px;font-size:13px;color:#424242;transform:scaleX(0.9420);">Payer</span><span class="t" style="left:984.90px;top:687.00px;font-size:13px;color:#424242;transform:scaleX(0.9697);">Principal Clinician</span><span class="t" style="left:1182.50px;top:687.00px;font-size:13px;color:#424242;transform:scaleX(0.9484);">Clinical Team</span><span class="t" style="left:1416.00px;top:687.00px;font-size:13px;color:#424242;transform:scaleX(0.9850);">Actions</span><svg style="left:509.4px;top:690px" width="10" height="11" viewBox="509.4 690 10 11"><path d="M514.0 699.6 V692.2 M510.79999999999995 695.2 L514.0 691.8 L517.1999999999999 695.2" fill="none" stroke="#333" stroke-width="1.1"/></svg><div style="left:410px;top:684px;width:22px;height:21px;background:#dff0cb;border-radius:5px;"></div><svg style="left:410px;top:684px" width="22" height="21" viewBox="410 684 22 21"><g fill="#333"><circle cx="421" cy="690.4" r="1.15"/><circle cx="421" cy="695" r="1.15"/><circle cx="421" cy="699.6" r="1.15"/></g></svg><div style="left:518px;top:684px;width:22px;height:21px;background:#dff0cb;border-radius:5px;"></div><svg style="left:518px;top:684px" width="22" height="21" viewBox="518 684 22 21"><g fill="#333"><circle cx="529" cy="690.4" r="1.15"/><circle cx="529" cy="695" r="1.15"/><circle cx="529" cy="699.6" r="1.15"/></g></svg><div style="left:625px;top:684px;width:22px;height:21px;background:#dff0cb;border-radius:5px;"></div><svg style="left:625px;top:684px" width="22" height="21" viewBox="625 684 22 21"><g fill="#333"><circle cx="636.4" cy="690.4" r="1.15"/><circle cx="636.4" cy="695" r="1.15"/><circle cx="636.4" cy="699.6" r="1.15"/></g></svg><div style="left:733px;top:684px;width:22px;height:21px;background:#dff0cb;border-radius:5px;"></div><svg style="left:733px;top:684px" width="22" height="21" viewBox="733 684 22 21"><g fill="#333"><circle cx="744" cy="690.4" r="1.15"/><circle cx="744" cy="695" r="1.15"/><circle cx="744" cy="699.6" r="1.15"/></g></svg><div style="left:841px;top:684px;width:22px;height:21px;background:#dff0cb;border-radius:5px;"></div><svg style="left:841px;top:684px" width="22" height="21" viewBox="841 684 22 21"><g fill="#333"><circle cx="851.6" cy="690.4" r="1.15"/><circle cx="851.6" cy="695" r="1.15"/><circle cx="851.6" cy="699.6" r="1.15"/></g></svg><div style="left:949px;top:684px;width:22px;height:21px;background:#dff0cb;border-radius:5px;"></div><svg style="left:949px;top:684px" width="22" height="21" viewBox="949 684 22 21"><g fill="#333"><circle cx="959.6" cy="690.4" r="1.15"/><circle cx="959.6" cy="695" r="1.15"/><circle cx="959.6" cy="699.6" r="1.15"/></g></svg><div style="left:1146px;top:684px;width:22px;height:21px;background:#dff0cb;border-radius:5px;"></div><svg style="left:1146px;top:684px" width="22" height="21" viewBox="1146 684 22 21"><g fill="#333"><circle cx="1157" cy="690.4" r="1.15"/><circle cx="1157" cy="695" r="1.15"/><circle cx="1157" cy="699.6" r="1.15"/></g></svg><div style="left:1379px;top:684px;width:22px;height:21px;background:#dff0cb;border-radius:5px;"></div><svg style="left:1379px;top:684px" width="22" height="21" viewBox="1379 684 22 21"><g fill="#333"><circle cx="1390" cy="690.4" r="1.15"/><circle cx="1390" cy="695" r="1.15"/><circle cx="1390" cy="699.6" r="1.15"/></g></svg><div class="row" style="left:332px;top:714px;width:1320px;height:57px;background:#fafafa;"></div><span class="t" style="left:338.50px;top:735.00px;font-size:13px;color:#424242;transform:scaleX(0.9283);">Caseload</span><span class="t" style="left:446.90px;top:735.00px;font-size:13px;color:#424242;transform:scaleX(1.0413);">145</span><span class="t" style="left:554.50px;top:735.00px;font-size:13px;color:#424242;transform:scaleX(0.9798);">ICA Healthcar...</span><span class="t" style="left:662.10px;top:735.00px;font-size:13px;color:#424242;transform:scaleX(1.0211);">1996-01-01</span><span class="t" style="left:769.70px;top:735.00px;font-size:13px;color:#424242;transform:scaleX(1.0304);">0030</span><span class="t" style="left:877.50px;top:735.00px;font-size:13px;color:#424242;transform:scaleX(0.9824);">Medicare A</span><span class="t" style="left:984.90px;top:735.00px;font-size:13px;color:#424242;transform:scaleX(0.9470);">John Smith</span><span class="t" style="left:1182.50px;top:735.00px;font-size:13px;color:#424242;transform:scaleX(1.1416);">--</span><button class="btn" style="left:1416px;top:727px;width:40px;height:31px;background:#134d6b;border-radius:4px;"><span class="t" style="left:8.70px;top:8.00px;font-size:13px;color:#fff;font-weight:700;transform:scaleX(0.8916);">Edit</span></button><div class="row" style="left:332px;top:771px;width:1320px;height:42px;background:#ebebeb;"></div><span class="t" style="left:338.50px;top:792.00px;font-size:13px;color:#424242;transform:scaleX(1.0093);">CLIN</span><span class="t" style="left:446.90px;top:792.00px;font-size:13px;color:#424242;transform:scaleX(1.0407);">3167</span><span class="t" style="left:554.50px;top:792.00px;font-size:13px;color:#424242;transform:scaleX(0.9798);">ICA Healthcar...</span><span class="t" style="left:662.10px;top:792.00px;font-size:13px;color:#424242;transform:scaleX(1.0211);">1985-01-01</span><span class="t" style="left:769.70px;top:792.00px;font-size:13px;color:#424242;transform:scaleX(1.0304);">0107</span><span class="t" style="left:877.50px;top:792.00px;font-size:13px;color:#424242;transform:scaleX(1.1416);">--</span><span class="t" style="left:984.90px;top:792.00px;font-size:13px;color:#424242;transform:scaleX(0.9470);">John Smith</span><span class="t" style="left:1182.50px;top:792.00px;font-size:13px;color:#424242;transform:scaleX(0.9256);">Chris Jordan,Jack Doe,Jack Smith</span><button class="btn" style="left:1416px;top:784px;width:40px;height:31px;background:#134d6b;border-radius:4px;"><span class="t" style="left:8.70px;top:8.00px;font-size:13px;color:#fff;font-weight:700;transform:scaleX(0.8916);">Edit</span></button><div style="left:439px;top:714px;width:1px;height:100px;background:rgba(0,0,0,.08);"></div><div style="left:547px;top:714px;width:1px;height:100px;background:rgba(0,0,0,.08);"></div><div style="left:654px;top:714px;width:1px;height:100px;background:rgba(0,0,0,.08);"></div><div style="left:762px;top:714px;width:1px;height:100px;background:rgba(0,0,0,.08);"></div><div style="left:870px;top:714px;width:1px;height:100px;background:rgba(0,0,0,.08);"></div><div style="left:977px;top:714px;width:1px;height:100px;background:rgba(0,0,0,.08);"></div><div style="left:1175px;top:714px;width:1px;height:100px;background:rgba(0,0,0,.08);"></div><div style="left:1408px;top:714px;width:1px;height:100px;background:rgba(0,0,0,.08);"></div><div style="left:1652px;top:714px;width:15px;height:122px;background:#fbfbfb;"></div><div style="left:1655px;top:732px;width:9px;height:33px;background:#8c8c8c;border-radius:4.5px;"></div><svg style="left:1652px;top:714px" width="15" height="122" viewBox="1652 714 15 122"><path d="M1655 725.6 L1659.6 719 L1664.2 725.6 Z" fill="#888" stroke="#888" stroke-width="0.8" stroke-linejoin="round"/><path d="M1655 825 L1659.6 831.6 L1664.2 825 Z" fill="#858585" stroke="#858585" stroke-width="0.8" stroke-linejoin="round"/></svg></section><div style="left:313px;top:813px;width:1388px;height:26px;background:#9fb4c1;"></div><div style="left:1668px;top:676px;width:18px;height:137px;background:#fff;"></div><div style="left:1686px;top:676px;width:15px;height:137px;background:#fff;"></div><svg style="left:1686px;top:796px" width="15" height="17" viewBox="1686 796 15 17"><path d="M1688.8 802 L1693.4 808.4 L1698 802 Z" fill="#7a7a7a" stroke="#7a7a7a" stroke-width="0.8" stroke-linejoin="round"/></svg><div style="left:1689px;top:674px;width:9px;height:5px;background:#8c8c8c;border-radius:0 0 4.5px 4.5px;"></div></main>
</div>
</body></html>
